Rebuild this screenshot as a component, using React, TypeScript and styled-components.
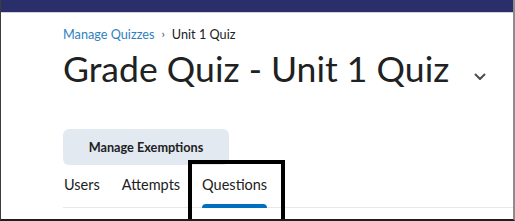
import React from "react";
import styled, { createGlobalStyle } from "styled-components";

const GlobalStyle = createGlobalStyle`
  html, body {
    margin: 0;
    padding: 0;
    background: #ffffff;
  }
  body {
    font-family: Lato, "Noto Sans", sans-serif;
    color: #202122;
  }
`;

const tabs = ["Users", "Attempts", "Questions"];

const App: React.FC = () => {
  return (
    <>
      <GlobalStyle />
      <Frame>
        <NavBar />
        <Content>
          <Breadcrumbs>
            <CrumbLink>Manage Quizzes</CrumbLink>
            <CrumbSep>›</CrumbSep>
            <CrumbCurrent>Unit 1 Quiz</CrumbCurrent>
          </Breadcrumbs>
          <TitleRow>
            <Title>Grade Quiz - Unit 1 Quiz</Title>
            <ChevronButton aria-label="Quiz actions">
              <svg width="12" height="8" viewBox="0 0 12 8">
                <path
                  d="M1.5 1.5 L6 6 L10.5 1.5"
                  fill="none"
                  stroke="#494c4e"
                  strokeWidth="2"
                  strokeLinecap="round"
                  strokeLinejoin="round"
                />
              </svg>
            </ChevronButton>
          </TitleRow>
          <ActionButton>Manage Exemptions</ActionButton>
          <TabList>
            {tabs.map((tab) => (
              <Tab key={tab} $active={tab === "Questions"}>
                {tab}
              </Tab>
            ))}
          </TabList>
        </Content>
        {/* highlight box drawn over the Questions tab */}
        <Highlight />
      </Frame>
    </>
  );
};

export default App;

const Frame = styled.div`
  position: relative;
  width: 515px;
  height: 221px;
  box-sizing: border-box;
  border-left: 1px solid #3c3c3c;
  border-right: 2px solid #8c8c8c;
  border-bottom: 2px solid #1e1e1e;
  overflow: hidden;
  display: flex;
  flex-direction: column;
`;

const NavBar = styled.div`
  height: 12px;
  background: #2a2f6c;
  border-bottom: 1px solid #cfd3d8;
  flex-shrink: 0;
`;

const Content = styled.div`
  padding: 11px 0 0 62px;
  display: flex;
  flex-direction: column;
  align-items: flex-start;
`;

const Breadcrumbs = styled.div`
  display: flex;
  align-items: center;
  gap: 6px;
  font-size: 12.7px;
  line-height: 20px;
  white-space: nowrap;
`;

const CrumbLink = styled.span`
  color: #2f7fc1;
`;

const CrumbSep = styled.span`
  color: #494c4e;
  font-size: 12px;
  margin: 0 1px;
`;

const CrumbCurrent = styled.span`
  color: #202122;
`;

const TitleRow = styled.div`
  display: flex;
  align-items: center;
  margin-top: 2px;
`;

const Title = styled.h1`
  margin: 0;
  font-size: 35.6px;
  font-weight: 400;
  line-height: 46px;
  white-space: nowrap;
  color: #202122;
`;

const ChevronButton = styled.span`
  display: flex;
  margin-left: 25px;
  margin-top: 16px;
`;

const ActionButton = styled.button`
  margin-top: 37px;
  width: 166px;
  height: 36px;
  border: none;
  border-radius: 6px;
  background: #e3e9f1;
  font-family: Lato, "Noto Sans", sans-serif;
  font-size: 12.7px;
  font-weight: 700;
  color: #202122;
  cursor: pointer;
`;

const TabList = styled.div`
  display: flex;
  gap: 22px;
  width: 450px;
  margin-top: 6px;
  border-bottom: 1px solid #e6e8ea;
`;

const Tab = styled.div<{ $active: boolean }>`
  position: relative;
  padding: 4px 0 12px 0;
  font-size: 14.5px;
  line-height: 20px;
  color: #202122;

  &:first-child {
    padding-left: 1px;
  }

  &::after {
    content: "";
    display: ${(p) => (p.$active ? "block" : "none")};
    position: absolute;
    left: 0;
    right: 0;
    bottom: -1px;
    height: 4px;
    border-radius: 4px 4px 0 0;
    background: #006fbf;
  }
`;

const Highlight = styled.div`
  position: absolute;
  left: 187px;
  top: 160px;
  width: 97px;
  height: 70px;
  box-sizing: border-box;
  border: 4px solid #000000;
  pointer-events: none;
`;
